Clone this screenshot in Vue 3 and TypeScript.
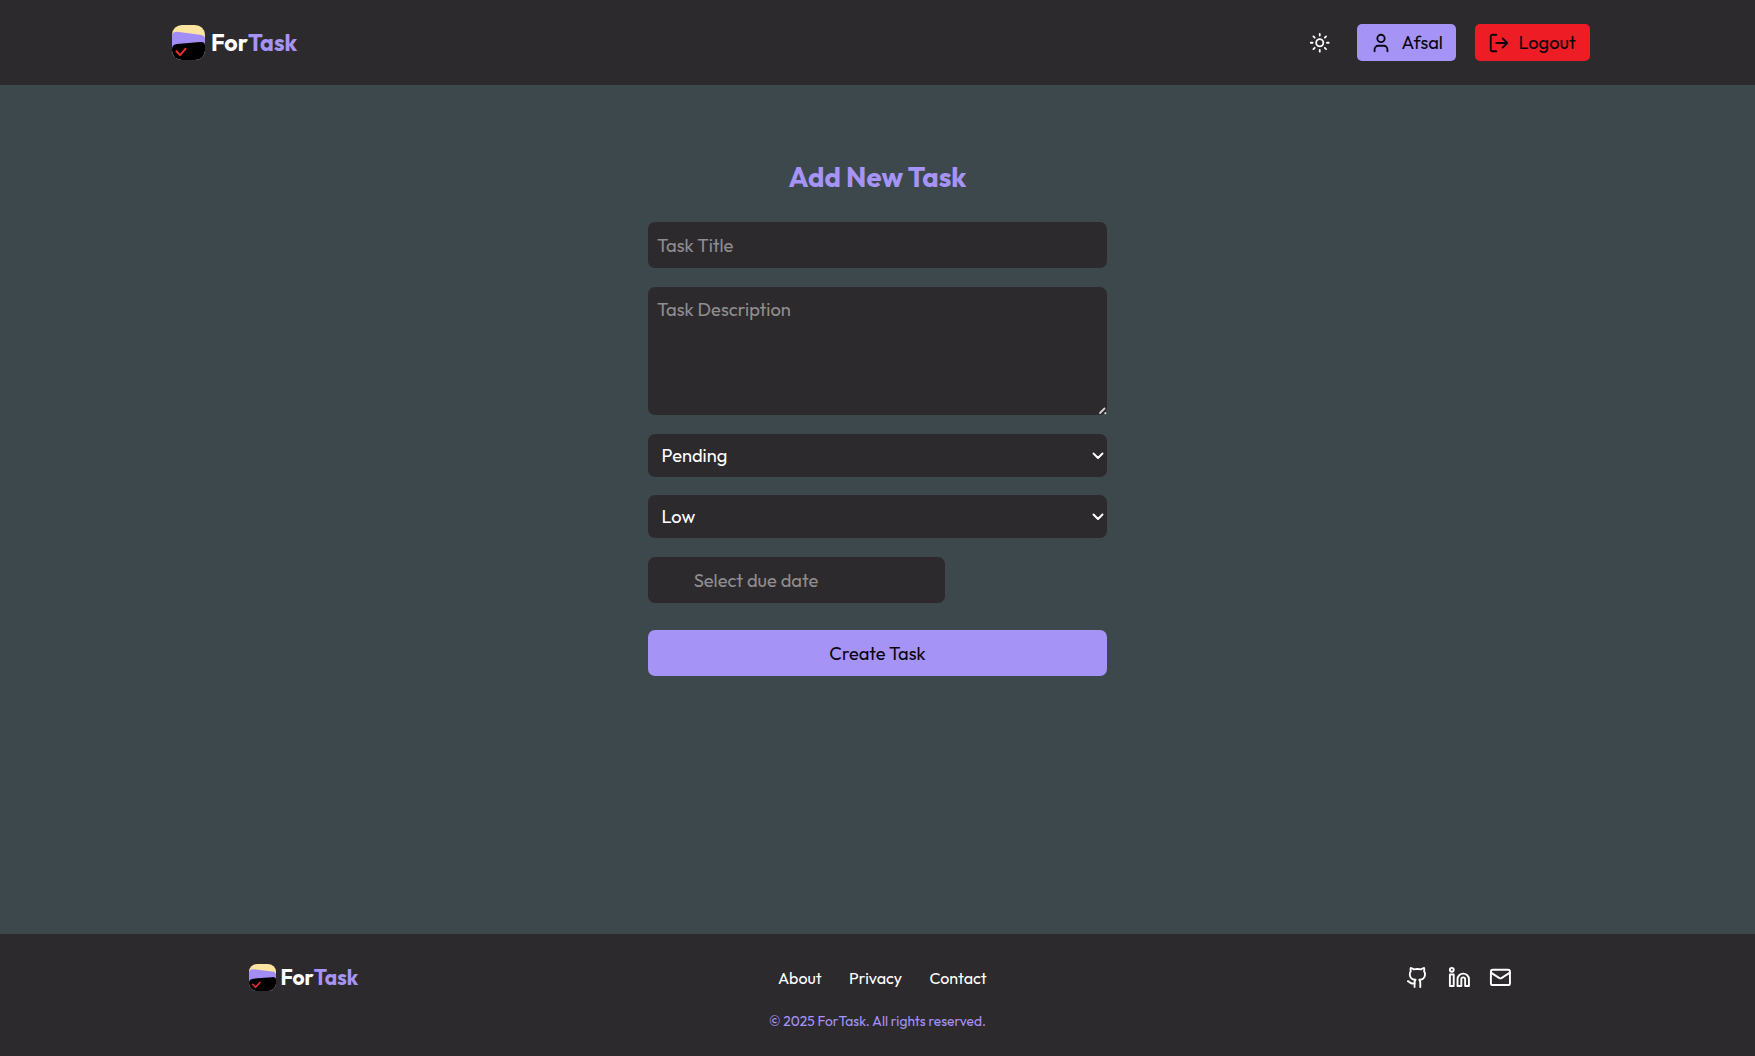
<script setup lang="ts">
import { ref } from 'vue'

const title = ref('')
const description = ref('')
const status = ref('Pending')
const priority = ref('Low')
const dueDate = ref('')
const statuses: string[] = ['Pending', 'In Progress', 'Completed']
const priorities: string[] = ['Low', 'Medium', 'High']
</script>

<template>
  <div class="page">
    <header class="header">
      <a class="brand">
        <svg class="logo" viewBox="0 0 33 36" preserveAspectRatio="none">
          <defs><clipPath id="mark-top"><rect width="33" height="36" rx="10" /></clipPath></defs>
          <g clip-path="url(#mark-top)">
            <rect width="33" height="36" fill="#fbe3a0" />
            <path d="M0 10Q1 7 5 7L28 10Q33 10.500 33 14V36H0Z" fill="#a28cf6" />
            <path d="M0 25Q0 20 5 19.500L28 17.500Q33 17 33 21V36H0Z" fill="#000" />
            <path class="check" d="M4.500 27L8 31L13.500 24.500" />
          </g>
        </svg>
        <span class="name"><span>For</span><span class="accent">Task</span></span>
      </a>
      <nav class="actions">
        <svg class="sun" viewBox="0 0 24 24">
          <circle cx="12" cy="12" r="4" />
          <path d="M12 2v2M12 20v2M4.930 4.930l1.410 1.410M17.660 17.660l1.410 1.410M2 12h2M20 12h2M6.340 17.660l-1.410 1.410M19.070 4.930l-1.410 1.410" />
        </svg>
        <button class="btn user">
          <svg viewBox="0 0 24 24"><path d="M19 21v-2a4 4 0 0 0-4-4H9a4 4 0 0 0-4 4v2" /><circle cx="12" cy="7" r="4" /></svg>
          <span>Afsal</span>
        </button>
        <button class="btn logout">
          <svg viewBox="0 0 24 24"><path d="M9 21H5a2 2 0 0 1-2-2V5a2 2 0 0 1 2-2h4M16 17l5-5-5-5M21 12H9" /></svg>
          <span>Logout</span>
        </button>
      </nav>
    </header>

    <main class="main">
      <form class="form" @submit.prevent>
        <h1>Add New Task</h1>
        <input v-model="title" class="field" placeholder="Task Title" />
        <div class="area-wrap">
          <textarea v-model="description" class="field area" placeholder="Task Description"></textarea>
          <svg class="grip" viewBox="0 0 9 9"><path d="M2 7L6.500 2.500M7.200 7.300L7.500 7" /></svg>
        </div>
        <div class="select">
          <select v-model="status"><option v-for="s in statuses" :key="s">{{ s }}</option></select>
          <svg viewBox="0 0 12 8"><path d="M1.500 1.500L6 6L10.500 1.500" /></svg>
        </div>
        <div class="select last">
          <select v-model="priority"><option v-for="p in priorities" :key="p">{{ p }}</option></select>
          <svg viewBox="0 0 12 8"><path d="M1.500 1.500L6 6L10.500 1.500" /></svg>
        </div>
        <input v-model="dueDate" class="field date" placeholder="Select due date" />
        <button class="submit">Create Task</button>
      </form>
    </main>

    <footer class="footer">
      <div class="row">
        <a class="brand small">
          <svg class="logo" viewBox="0 0 33 36" preserveAspectRatio="none">
            <defs><clipPath id="mark-foot"><rect width="33" height="36" rx="10" /></clipPath></defs>
            <g clip-path="url(#mark-foot)">
              <rect width="33" height="36" fill="#fbe3a0" />
              <path d="M0 10Q1 7 5 7L28 10Q33 10.500 33 14V36H0Z" fill="#a28cf6" />
              <path d="M0 25Q0 20 5 19.500L28 17.500Q33 17 33 21V36H0Z" fill="#000" />
              <path class="check" d="M4.500 27L8 31L13.500 24.500" />
            </g>
          </svg>
          <span class="name"><span>For</span><span class="accent">Task</span></span>
        </a>
        <nav class="links"><a>About</a><a>Privacy</a><a>Contact</a></nav>
        <div class="social">
          <svg viewBox="0 0 24 24"><path d="M15 22v-4a4.800 4.800 0 0 0-1-3.500c3 0 6-2 6-5.500.080-1.250-.270-2.480-1-3.500.280-1.150.280-2.350 0-3.500 0 0-1 0-3 1.500-2.640-.500-5.360-.500-8 0C6 2 5 2 5 2c-.300 1.150-.300 2.350 0 3.500A5.403 5.403 0 0 0 4 9c0 3.500 3 5.500 6 5.500-.390.490-.680 1.050-.850 1.650-.170.600-.220 1.230-.150 1.850v4" /><path d="M9 18c-4.510 2-5-2-7-2" /></svg>
          <svg viewBox="0 0 24 24"><path d="M16 8a6 6 0 0 1 6 6v7h-4v-7a2 2 0 0 0-4 0v7h-4v-7a6 6 0 0 1 6-6z" /><rect x="2" y="9" width="4" height="12" /><circle cx="4" cy="4" r="2" /></svg>
          <svg viewBox="0 0 24 24"><rect x="2" y="4" width="20" height="16" rx="2" /><path d="m22 7-8.970 5.700a1.940 1.940 0 0 1-2.060 0L2 7" /></svg>
        </div>
      </div>
      <p class="copy">© 2025 ForTask. All rights reserved.</p>
    </footer>
  </div>
</template>

<style>
body {
  background: #3d484d;
}
</style>

<style scoped>
.page {
  display: flex;
  flex-direction: column;
  height: 1056px;
  overflow: hidden;
  background: #3d484d;
  color: #fff;
  font-family: Outfit, Lato, sans-serif;
  font-size: 18.28px;
}
.page * {
  box-sizing: border-box;
}
svg {
  display: block;
  flex: none;
  fill: none;
  stroke: currentColor;
  stroke-width: 2;
  stroke-linecap: round;
  stroke-linejoin: round;
}
.logo {
  width: 33px;
  height: 35px;
  stroke: none;
}
.check {
  fill: none;
  stroke: #e8302f;
  stroke-width: 2;
}
.header {
  display: flex;
  flex: none;
  justify-content: space-between;
  align-items: center;
  height: 85px;
  padding: 0 165px 0 172px;
  background: #2d2a2d;
}
.brand {
  display: flex;
  align-items: center;
  gap: 6px;
}
.name {
  display: flex;
  font-size: 23.2px;
  font-weight: 700;
  line-height: 28px;
}
.accent {
  color: #a693f6;
}
.actions {
  display: flex;
  align-items: center;
}
.sun {
  width: 21.5px;
  height: 21.5px;
  margin-right: 27px;
}
.btn {
  display: flex;
  align-items: center;
  height: 37px;
  padding: 0 0 0 13px;
  border: 0;
  border-radius: 5px;
  color: #09060f;
  font: inherit;
  white-space: nowrap;
}
.btn svg {
  width: 22px;
  height: 22px;
}
.user {
  width: 99px;
  margin-right: 19px;
  background: #a693f6;
}
.user span {
  margin-left: 9.5px;
}
.logout {
  width: 115px;
  background: #ee1c24;
}
.logout span {
  margin-left: 8.5px;
}
.main {
  flex: 1;
  display: flex;
  justify-content: center;
  padding-top: 75px;
}
.form {
  display: flex;
  flex-direction: column;
  width: 459px;
}
h1 {
  margin: 0 0 28px;
  color: #a693f6;
  font-size: 27.6px;
  line-height: 34px;
  text-align: center;
}
.field {
  flex: none;
  height: 46px;
  margin: 0 0 19px;
  padding: 0 9px;
  border: 0;
  border-radius: 7px;
  outline: 0;
  background: #2d2a2d;
  color: #fff;
  font-family: inherit;
  font-size: 18.35px;
}
.field::placeholder {
  color: #8f8d8f;
}
.area-wrap {
  display: grid;
  flex: none;
  height: 128px;
  margin-bottom: 19px;
}
.area-wrap > * {
  grid-area: 1 / 1;
}
.area {
  width: 100%;
  height: 128px;
  margin: 0;
  padding-top: 11px;
  line-height: 23px;
  resize: none;
}
.grip {
  place-self: end;
  width: 9px;
  height: 9px;
  stroke: #d4d3d4;
  stroke-width: 1.8;
  pointer-events: none;
}
.select {
  display: grid;
  flex: none;
  align-items: center;
  height: 43px;
  margin-bottom: 18px;
}
.select.last {
  margin-bottom: 19px;
}
.select > * {
  grid-area: 1 / 1;
}
.select select {
  width: 100%;
  height: 43px;
  padding: 0 13.6px;
  border: 0;
  border-radius: 7px;
  appearance: none;
  background: #2d2a2d;
  color: #fff;
  font-family: inherit;
  font-size: 18.28px;
}
.select svg {
  justify-self: end;
  width: 12px;
  height: 8px;
  margin-right: 3px;
  pointer-events: none;
}
.date {
  width: 297.4px;
  margin-bottom: 27px;
  padding-left: 45.7px;
}
.submit {
  flex: none;
  height: 46px;
  border: 0;
  border-radius: 7px;
  background: #a693f6;
  color: #09060f;
  font: inherit;
}
.footer {
  flex: none;
  height: 122px;
  padding-top: 30px;
  background: #2d2a2d;
}
.row {
  display: flex;
  justify-content: space-between;
  align-items: center;
  height: 27px;
  padding: 0 243.5px 0 248.5px;
}
.small {
  gap: 5px;
}
.small .logo {
  width: 27px;
  height: 27px;
}
.small .name {
  font-size: 20.9px;
  line-height: 27px;
}
.links {
  display: flex;
  gap: 27.4px;
  font-size: 16.05px;
}
.social {
  display: flex;
  gap: 18.28px;
}
.social svg {
  width: 22.85px;
  height: 22.85px;
}
.copy {
  margin: 20px 0 0;
  color: #a693f6;
  font-size: 13.75px;
  line-height: 20px;
  text-align: center;
}
</style>
